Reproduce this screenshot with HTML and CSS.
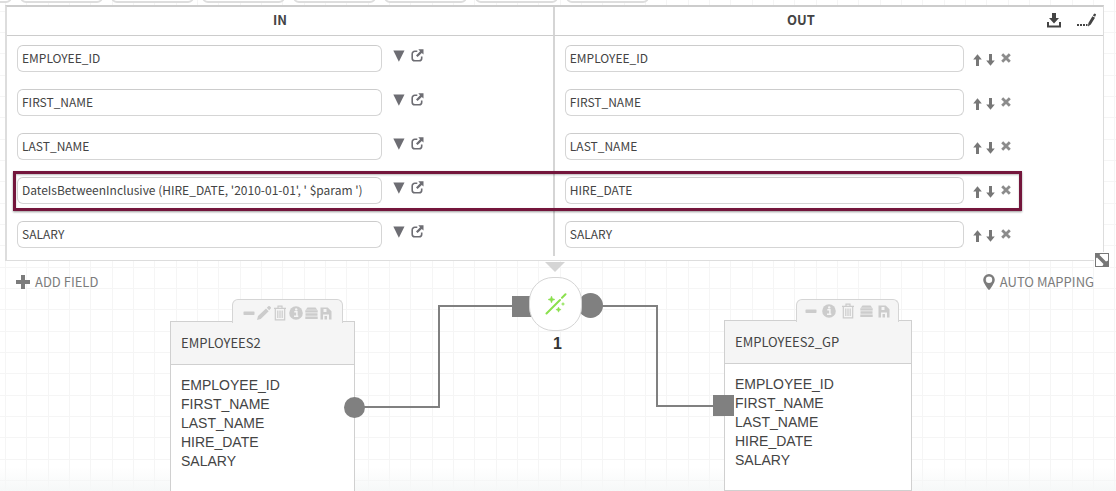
FILE: index.html
```html
<!DOCTYPE html>
<html lang="en">
<head>
<meta charset="utf-8">
<title>Field mapping</title>
<link rel="stylesheet" href="styles.css">
</head>
<body>
<svg class="sprite" aria-hidden="true">
  <symbol id="i-caret" viewBox="0 0 12 12"><path d="M0.3 0.5h11.2L5.9 11.8z"/></symbol>
  <symbol id="i-open" viewBox="0 0 13 13"><path d="M6.3 2.3H3.8a2.6 2.6 0 0 0-2.6 2.6v4.3a2.6 2.6 0 0 0 2.6 2.6h4.3a2.6 2.6 0 0 0 2.6-2.6V7.6" fill="none" stroke="currentColor" stroke-width="1.6"/><path d="M7.3 0.3h5.2v5.2L10.8 3.9 6.6 8 5 6.4l4.1-4.2z"/></symbol>
  <symbol id="i-up" viewBox="0 0 9 12"><path d="M4.5 0.2L8.8 5.4H6V12H3V5.4H0.2z"/></symbol>
  <symbol id="i-down" viewBox="0 0 9 12"><path d="M4.5 11.8L8.8 6.6H6V0H3v6.6H0.2z"/></symbol>
  <symbol id="i-x" viewBox="0 0 10 10"><path d="M1.200 1.200l7.600 7.600M8.800 1.200L1.200 8.800" stroke="currentColor" stroke-width="2.800" fill="none"/></symbol>
  <symbol id="i-minus" viewBox="0 0 12 16"><rect x="0.5" y="6.5" width="11" height="3.4" rx="0.6"/></symbol>
  <symbol id="i-pencil" viewBox="0 0 14 16"><path d="M0 15l1-4 8-7.4L11.7 6.300l-8 7.600zM9.800 2.800L11.600 1.100q.6-.4 1.200.1l1 1q.5.600 0 1.200l-1.600 1.900z"/></symbol>
  <symbol id="i-trash" viewBox="0 0 14 16"><path d="M1 3.400h12M5 3.200V1.200h4v2M2.300 4v10.800h9.400V4M4.800 5.500v7.500M7 5.500v7.500M9.200 5.500v7.500" fill="none" stroke="currentColor" stroke-width="1.200"/></symbol>
  <symbol id="i-info" viewBox="0 0 14 16"><circle cx="7" cy="8" r="6.800"/><path d="M5.300 6.800h2.600v4.300M5 11.300h4.300" fill="none" stroke="#f5f5f5" stroke-width="1.500"/><circle cx="7.200" cy="4.400" r="1.200" fill="#f5f5f5"/></symbol>
  <symbol id="i-stack" viewBox="0 0 13 16"><path d="M2.500 2.500h8l1.800 2.200H.7zM.3 5.200h12.400v2.400H.3zM.5 8.300h12v2.400H.5zM.3 11.400h12.400V14H.3z"/></symbol>
  <symbol id="i-save" viewBox="0 0 12 16"><path fill-rule="evenodd" d="M.5 2.500h7.200l3.800 3.800V14.500H9V9.500H3v5H.5zM3.500 4v3h3V4z"/><path d="M4.500 11h2.500v3.500H4.500z"/></symbol>
</svg>

<main class="workspace">
  <section class="diagram">
    <svg class="wires" aria-hidden="true">
      <path d="M354 407H439V306H520M590 306H657V406H724"/>
    </svg>

    <article class="entity entity-source">
      <div class="entity-tools">
        <button type="button" aria-label="Collapse"><svg class="w12"><use href="#i-minus"/></svg></button>
        <button type="button" aria-label="Edit"><svg class="w14"><use href="#i-pencil"/></svg></button>
        <button type="button" aria-label="Delete"><svg class="w14"><use href="#i-trash"/></svg></button>
        <button type="button" aria-label="Info"><svg class="w14"><use href="#i-info"/></svg></button>
        <button type="button" aria-label="Data"><svg class="w13"><use href="#i-stack"/></svg></button>
        <button type="button" aria-label="Save"><svg class="w12"><use href="#i-save"/></svg></button>
      </div>
      <h2>EMPLOYEES2</h2>
      <ul><li>EMPLOYEE_ID</li><li>FIRST_NAME</li><li>LAST_NAME</li><li>HIRE_DATE</li><li>SALARY</li></ul>
      <span class="port port-round"></span>
    </article>

    <div class="step">
      <span class="step-in"></span>
      <span class="step-out"></span>
      <button type="button" class="step-body" aria-label="Transformation 1">
        <svg viewBox="0 0 22 22"><path d="M1.500 20.500L15 7M17 4.800L20.500 1.200" stroke="currentColor" stroke-width="2" stroke-linecap="round" fill="none"/><path d="M6.500 3l1 2.500 2.500 1-2.500 1-1 2.500-1-2.500-2.500-1 2.500-1zM13.500 14l.8 1.800 1.800.8-1.800.8-.8 1.800-.8-1.800-1.800-.8 1.800-.8zM18 9.500l.5 1 1 .5-1 .5-.5 1-.5-1-1-.5 1-.5z" stroke="currentColor" stroke-width="0.500"/></svg>
      </button>
      <span class="step-label">1</span>
    </div>

    <article class="entity entity-target">
      <div class="entity-tools">
        <button type="button" aria-label="Collapse"><svg class="w12"><use href="#i-minus"/></svg></button>
        <button type="button" aria-label="Info"><svg class="w14"><use href="#i-info"/></svg></button>
        <button type="button" aria-label="Delete"><svg class="w14"><use href="#i-trash"/></svg></button>
        <button type="button" aria-label="Data"><svg class="w13"><use href="#i-stack"/></svg></button>
        <button type="button" aria-label="Save"><svg class="w12"><use href="#i-save"/></svg></button>
      </div>
      <h2>EMPLOYEES2_GP</h2>
      <ul><li>EMPLOYEE_ID</li><li>FIRST_NAME</li><li>LAST_NAME</li><li>HIRE_DATE</li><li>SALARY</li></ul>
      <span class="port port-square"></span>
    </article>
  </section>

  <div class="tabs"><span></span><span></span><span></span><span></span><span></span><span></span><span></span><span></span></div>

  <section class="panel">
    <table class="mapping">
      <thead>
        <tr>
          <th scope="col">IN</th>
          <th scope="col">
            <div class="out-head">
              <span>OUT</span>
              <button type="button" aria-label="Download"><svg width="14" height="15" viewBox="0 0 14 15"><path d="M5 0h4v5h3L7 10.500 2 5h3z"/><path d="M1 9v4.500h12V9" fill="none" stroke="currentColor" stroke-width="2"/></svg></button>
              <button type="button" aria-label="Rename"><svg width="19" height="14" viewBox="0 0 19 14"><path d="M0 11h2V13H0zM3 11h2V13H3zM6 11h2V13H6zM9 11h1.500v2H9zM11 13.400l.4-3.400 4-6.700 2.600 1.500-4.200 6.800zM15.900 2.500l1-1.500q.5-.7 1.200-.3l.5.300q.6.500.3 1.100l-.8 1.700z"/></svg></button>
            </div>
          </th>
        </tr>
      </thead>
      <tbody>
        <tr>
          <td><div class="cell"><input type="text" aria-label="In 1" value="EMPLOYEE_ID"><button class="options" type="button" aria-label="Options"><svg width="12" height="12"><use href="#i-caret"/></svg></button><button class="open" type="button" aria-label="Open"><svg width="13" height="13"><use href="#i-open"/></svg></button></div></td>
          <td><div class="cell"><input type="text" aria-label="Out 1" value="EMPLOYEE_ID"><button class="up" type="button" aria-label="Up"><svg width="9" height="12"><use href="#i-up"/></svg></button><button class="down" type="button" aria-label="Down"><svg width="9" height="12"><use href="#i-down"/></svg></button><button class="remove" type="button" aria-label="Remove"><svg width="10" height="10"><use href="#i-x"/></svg></button></div></td>
        </tr>
        <tr>
          <td><div class="cell"><input type="text" aria-label="In 2" value="FIRST_NAME"><button class="options" type="button" aria-label="Options"><svg width="12" height="12"><use href="#i-caret"/></svg></button><button class="open" type="button" aria-label="Open"><svg width="13" height="13"><use href="#i-open"/></svg></button></div></td>
          <td><div class="cell"><input type="text" aria-label="Out 2" value="FIRST_NAME"><button class="up" type="button" aria-label="Up"><svg width="9" height="12"><use href="#i-up"/></svg></button><button class="down" type="button" aria-label="Down"><svg width="9" height="12"><use href="#i-down"/></svg></button><button class="remove" type="button" aria-label="Remove"><svg width="10" height="10"><use href="#i-x"/></svg></button></div></td>
        </tr>
        <tr>
          <td><div class="cell"><input type="text" aria-label="In 3" value="LAST_NAME"><button class="options" type="button" aria-label="Options"><svg width="12" height="12"><use href="#i-caret"/></svg></button><button class="open" type="button" aria-label="Open"><svg width="13" height="13"><use href="#i-open"/></svg></button></div></td>
          <td><div class="cell"><input type="text" aria-label="Out 3" value="LAST_NAME"><button class="up" type="button" aria-label="Up"><svg width="9" height="12"><use href="#i-up"/></svg></button><button class="down" type="button" aria-label="Down"><svg width="9" height="12"><use href="#i-down"/></svg></button><button class="remove" type="button" aria-label="Remove"><svg width="10" height="10"><use href="#i-x"/></svg></button></div></td>
        </tr>
        <tr class="marked">
          <td><div class="cell"><input type="text" aria-label="In 4" value="DateIsBetweenInclusive (HIRE_DATE, '2010-01-01', ' $param ')"><button class="options" type="button" aria-label="Options"><svg width="12" height="12"><use href="#i-caret"/></svg></button><button class="open" type="button" aria-label="Open"><svg width="13" height="13"><use href="#i-open"/></svg></button></div><span class="marker"></span></td>
          <td><div class="cell"><input type="text" aria-label="Out 4" value="HIRE_DATE"><button class="up" type="button" aria-label="Up"><svg width="9" height="12"><use href="#i-up"/></svg></button><button class="down" type="button" aria-label="Down"><svg width="9" height="12"><use href="#i-down"/></svg></button><button class="remove" type="button" aria-label="Remove"><svg width="10" height="10"><use href="#i-x"/></svg></button></div></td>
        </tr>
        <tr>
          <td><div class="cell"><input type="text" aria-label="In 5" value="SALARY"><button class="options" type="button" aria-label="Options"><svg width="12" height="12"><use href="#i-caret"/></svg></button><button class="open" type="button" aria-label="Open"><svg width="13" height="13"><use href="#i-open"/></svg></button></div></td>
          <td><div class="cell"><input type="text" aria-label="Out 5" value="SALARY"><button class="up" type="button" aria-label="Up"><svg width="9" height="12"><use href="#i-up"/></svg></button><button class="down" type="button" aria-label="Down"><svg width="9" height="12"><use href="#i-down"/></svg></button><button class="remove" type="button" aria-label="Remove"><svg width="10" height="10"><use href="#i-x"/></svg></button></div></td>
        </tr>
      </tbody>
    </table>
    <span class="resize"><svg width="14" height="14" viewBox="0 0 14 14"><rect x="0.500" y="0.500" width="13" height="13" fill="#fff" stroke="currentColor"/><path d="M0 0h6L4.500 2l6.500 6.500 3-1.500v7H7l1.500-3L2 4.500 0 6z"/></svg></span>
    <span class="pointer"></span>
  </section>

  <div class="actions">
    <button type="button"><svg width="14" height="14" viewBox="0 0 14 14"><path d="M5 0h4v5h5v4H9v5H5V9H0V5h5z"/></svg>ADD FIELD</button>
    <button type="button"><svg width="12" height="16" viewBox="0 0 12 16"><path fill-rule="evenodd" d="M6 0a5.800 5.800 0 0 1 5.800 5.800c0 2.400-1.200 3.400-2.300 5.600L7 15.200q-1 1.300-2 0L2.500 11.400C1.400 9.200.2 8.200.2 5.800A5.800 5.800 0 0 1 6 0zM6 2.500a3.200 3.200 0 1 0 0 6.400 3.200 3.200 0 0 0 0-6.400z"/></svg>AUTO MAPPING</button>
  </div>
</main>
</body>
</html>
```
FILE: styles.css
```css
* { box-sizing: border-box; }

body {
  margin: 0;
  background: #fff;
  color: #444;
  font: 13px/20px "Noto Sans CJK SC", "Noto Sans", sans-serif;
}

button {
  display: flex;
  align-items: center;
  padding: 0;
  border: 0;
  background: none;
  color: inherit;
  font: inherit;
  cursor: pointer;
}

svg { display: block; fill: currentColor; }

.sprite { position: absolute; width: 0; height: 0; }

.workspace {
  position: relative;
  min-height: 100vh;
  overflow: hidden;
  background-image:
    linear-gradient(to top, #f6f8f8, #fff0 24px),
    linear-gradient(to right, #0000 5px, #f5f5f5 5px 6px, #0000 6px 26px, #f5f5f5 26px 27px, #0000 27px 48px, #f5f5f5 48px 49px, #0000 49px),
    linear-gradient(to bottom, #0000 11px, #f5f5f5 11px 12px, #0000 12px 32px, #f5f5f5 32px 33px, #0000 33px 53px, #f5f5f5 53px 54px, #0000 54px);
  background-size: 100% 100%, 64px 64px, 64px 64px;
}

/* Toolbar tabs scrolled out above the panel */
.tabs {
  display: flex;
  align-items: flex-end;
  gap: 8px;
  height: 3px;
  margin: 0 0 2px -71px;
  overflow: hidden;
}

.tabs span {
  flex: none;
  width: 83px;
  height: 20px;
  border: 2px solid #ddd;
  border-radius: 6px;
  background: #fff;
}

/* Mapping panel */
.panel {
  position: relative;
  margin: 0 12px 0 5px;
  padding-bottom: 4px;
  border: 2px solid #ddd;
  border-width: 2px 1px 1px 2px;
  border-top-color: #ccc;
  background: #fff;
}

.mapping {
  width: 100%;
  border-spacing: 0;
  table-layout: fixed;
}

.mapping th {
  height: 29px;
  padding: 0 0 2px;
  border-bottom: 1px solid #ccc;
  font-weight: 700;
}

.mapping th:first-child { width: 49.8%; }

.mapping td { height: 44px; padding: 9px 129px 0 10px; vertical-align: top; }
.mapping td + td { padding-right: 92px; }

.mapping th + th, .mapping td + td { border-left: 2px solid #d5d5d5; }

.out-head { display: flex; align-items: center; padding-right: 7px; }
.out-head span { flex: 1; }
.out-head button + button { margin-left: 16px; }

.cell { display: flex; align-items: flex-start; color: #6d6d73; }

.cell input {
  flex: 1;
  min-width: 0;
  height: 27px;
  padding: 0 4px 2px;
  border: 1px solid #d5d5d5;
  border-top-color: #ccc;
  border-radius: 6px;
  background: #fff;
  color: #444;
  font: inherit;
  font-size: 12px;
}

.options { margin: 5px 6px 0 11px; }
.open { margin-top: 4px; }
.up { margin: 9px 4px 0 9px; color: #777; }
.down { margin: 9px 6px 0 0; color: #777; }
.remove { margin-top: 8px; color: #8c8c8c; }

.marked { position: relative; }

.marker {
  position: absolute;
  top: 3px;
  right: 81px;
  left: 6px;
  height: 40px;
  border: 3px solid #74163c;
  box-shadow: 0 1px 2px #0006, inset 0 1px 2px #0004;
  pointer-events: none;
}

.resize {
  position: absolute;
  right: -7px;
  bottom: -8px;
  border: 1px solid #fff;
  color: #777;
  cursor: nwse-resize;
}

.pointer {
  position: absolute;
  top: 100%;
  left: 50%;
  width: 20px;
  height: 10px;
  margin: 2px 0 0 -10px;
  background: #d5d5d5;
  clip-path: polygon(0 0, 100% 0, 50% 100%);
}

.actions {
  position: relative;
  display: flex;
  justify-content: space-between;
  margin: 11px 22px 0 16px;
  color: #7c7c7c;
}

.actions button { gap: 5px; }

/* Canvas */
.diagram { position: absolute; inset: 0; }

.wires {
  position: absolute;
  width: 100%;
  height: 100%;
  fill: none;
  stroke: #808080;
  stroke-width: 2px;
}

.entity {
  position: absolute;
  border: 1px solid #d0d0d0;
  background: #fff;
}

.entity-source { top: 321px; left: 170px; width: 185px; height: 180px; }
.entity-target { top: 320px; left: 724px; width: 188px; height: 171px; }

.entity h2 {
  height: 43px;
  margin: 0;
  padding: 0 10px;
  border-bottom: 1px solid #d0d0d0;
  background: #f5f5f5;
  font: 13px/42px "Noto Sans CJK SC", "Noto Sans", sans-serif;
}

.entity ul {
  margin: 0;
  padding: 11px 10px;
  list-style: none;
  font: 14px/19px "Liberation Sans", Arial, sans-serif;
}

.entity-tools {
  position: absolute;
  bottom: 100%;
  right: 11px;
  display: flex;
  align-items: center;
  gap: 2px;
  height: 24px;
  margin-bottom: -1px;
  padding: 2px 10px 0;
  border: 1px solid #d5d5d5;
  border-bottom: 0;
  border-radius: 6px 6px 0 0;
  background: #f5f5f5;
  color: #ccc;
}

.entity-target .entity-tools { gap: 5px; right: 12px; height: 23px; padding: 0 8px; }

.entity-tools svg { height: 16px; }
.w12 { width: 12px; }
.w13 { width: 13px; }
.w14 { width: 14px; }

.port { position: absolute; background: #808080; }
.port-round { top: 75px; right: -11px; width: 21px; height: 21px; border-radius: 50%; }
.port-square { top: 74px; left: -12px; width: 21px; height: 21px; }

.step {
  position: absolute;
  top: 277px;
  left: 529px;
  width: 53px;
  text-align: center;
}

.step-in, .step-out { position: absolute; background: #808080; }
.step-in { top: 19px; left: -17px; width: 21px; height: 21px; }
.step-out { top: 16px; right: -21px; width: 25px; height: 25px; border-radius: 50%; }

.step-body {
  position: relative;
  justify-content: center;
  width: 53px;
  height: 54px;
  border: 1px solid #d5d5d5;
  border-radius: 24px;
  background: #fff;
  color: #8be04e;
}

.step-body svg { width: 22px; height: 22px; }

.step-label {
  display: block;
  padding: 3px 0 0 4px;
  color: #333;
  font: 700 16px/20px "Liberation Sans", Arial, sans-serif;
}
```
